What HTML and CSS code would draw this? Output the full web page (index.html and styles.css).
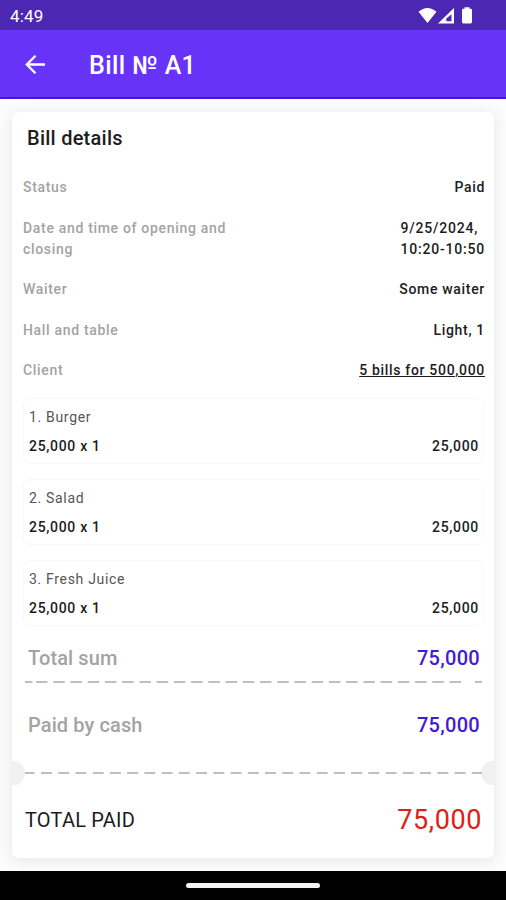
FILE: index.html
```html
<!DOCTYPE html>
<html lang="en">
<head>
<meta charset="utf-8">
<title>Bill № A1</title>
<link rel="stylesheet" href="styles.css">
</head>
<body>
<div class="screen">
  <div class="status-bar">
    <span class="clock">4:49</span>
    <svg class="status-icons" width="56" height="20" viewBox="0 0 56 20" fill="#fff">
      <path d="M0.5 5.7Q9.5-1.9 18.5 5.7L9.5 17Z"/>
      <path fill-rule="evenodd" d="M20 17.5L36 2V17.5ZM28.3 15.2H33.5V8.2L28.3 12.4Z"/>
      <path d="M46.5 1.2h5v1.6h1.2q1.3 0 1.3 1.3v12q0 1.4-1.3 1.4h-7.4q-1.3 0-1.3-1.4v-12q0-1.3 1.3-1.3h1.2z"/>
    </svg>
  </div>
  <header class="app-bar">
    <svg class="back" width="22" height="20" viewBox="0 0 22 20" fill="none" stroke="#fff" stroke-width="2.3"><path d="M20 10.5H2.5M10.5 1.7L1.8 10.5L10.5 19.3"/></svg>
    <h1 class="title">Bill № A1</h1>
  </header>
  <main class="content">
    <section class="card">
      <h2 class="card-title">Bill details</h2>
      <div class="details">
        <div class="row"><span class="label">Status</span><span class="value">Paid</span></div>
        <div class="row"><span class="label">Date and time of opening and<br>closing</span><span class="value date">9/25/2024,<br>10:20-10:50</span></div>
        <div class="row"><span class="label">Waiter</span><span class="value">Some waiter</span></div>
        <div class="row"><span class="label">Hall and table</span><span class="value">Light, 1</span></div>
        <div class="row"><span class="label">Client</span><span class="value link">5 bills for 500,000</span></div>
      </div>
      <div class="items">
        <div class="item"><div class="name">1. Burger</div><div class="price"><span>25,000 x 1</span><span>25,000</span></div></div>
        <div class="item"><div class="name">2. Salad</div><div class="price"><span>25,000 x 1</span><span>25,000</span></div></div>
        <div class="item"><div class="name">3. Fresh Juice</div><div class="price"><span>25,000 x 1</span><span>25,000</span></div></div>
      </div>
      <div class="sum"><span>Total sum</span><span class="amount">75,000</span></div>
      <svg class="dash" width="458" height="2"><path d="M0 1H7.5M11 1H437" stroke-dasharray="11.5 5.73"/><path d="M450 1H457"/></svg>
      <div class="sum cash"><span>Paid by cash</span><span class="amount">75,000</span></div>
      <div class="divider">
        <svg class="dash" width="458" height="2"><path d="M0 1H9.6M16 1H457" stroke-dasharray="11 6.23"/></svg>
      </div>
      <div class="total"><span>TOTAL PAID</span><span class="total-amount">75,000</span></div>
    </section>
  </main>
  <nav class="nav-bar"><div class="handle"></div></nav>
</div>
</body>
</html>
```

FILE: styles.css
```css
* { box-sizing: border-box; }
body { margin: 0; font-family: Roboto, sans-serif; color: #1c1c1c; background: #fff; }
.screen { width: 506px; height: 900px; display: flex; flex-direction: column; overflow: hidden; }
.status-bar { height: 30px; background: #4b27b3; color: #fff; display: flex; align-items: center; justify-content: space-between; padding: 2px 32px 0 10px; flex: none; }
.clock { font-size: 17px; line-height: 20px; letter-spacing: .2px; }
.status-icons { margin-top: -1px; }
.app-bar { height: 69px; background: #6733f8; border-bottom: 2px solid #4a13dc; display: flex; align-items: center; padding: 1px 0 0 25px; flex: none; }
.title { margin: 3px 0 0 42px; font-size: 25px; line-height: 30px; font-weight: 500; letter-spacing: .4px; color: #fff; }
.content { flex: 1; background: #fcfcfc; padding: 13px 12px 0; overflow: hidden; }
.card { height: 746px; background: #fff; border-radius: 7px; box-shadow: 0 2px 14px 2px rgba(0,0,0,.075); padding: 15px 10px 0 11px; }
.card-title { margin: 0 0 28px 4px; font-size: 20px; line-height: 22px; font-weight: 500; letter-spacing: .25px; }
.details { display: flex; flex-direction: column; gap: 19.5px; }
.row { display: flex; justify-content: space-between; font-size: 14px; line-height: 21px; font-weight: 500; letter-spacing: .68px; margin-right: -1px; }
.label { color: #a3a3a3; }
.date { text-align: left; letter-spacing: .78px; }
.link { text-decoration: underline; text-underline-offset: 1px; text-decoration-thickness: 1px; }
.items { display: flex; flex-direction: column; gap: 15.2px; margin-top: 17px; }
.item { height: 66px; border: 1px solid #f8f8f8; border-radius: 7px; padding: 8px 4px 0 5px; font-size: 14px; line-height: 20px; letter-spacing: .68px; }
.name { color: #555; }
.price { display: flex; justify-content: space-between; margin-top: 9px; font-weight: 500; }
.sum { display: flex; justify-content: space-between; margin-top: 19.4px; padding: 0 4px 0 5px; font-size: 20px; line-height: 24px; font-weight: 500; letter-spacing: .1px; color: #a3a3a3; }
.amount { color: #431bd3; letter-spacing: .3px; }
.dash { display: block; margin: 11px 0 0 2px; fill: none; stroke: #bfbfbf; stroke-width: 2; }
.cash { margin-top: 30px; }
.divider { height: 24px; display: flex; align-items: center; justify-content: space-between; margin: 24px -10px 0 -11px; background: radial-gradient(circle at 0 12px, #f1f1f1 12.5px, transparent 13px), radial-gradient(circle at 100% 12px, #f1f1f1 12.5px, transparent 13px); }
.divider .dash { margin: 0 0 0 13px; }
.total { display: flex; align-items: center; justify-content: space-between; height: 36px; margin-top: 17px; padding: 0 2px; font-size: 20px; letter-spacing: .2px; }
.total-amount { font-size: 27px; letter-spacing: .6px; color: #dc2114; }
.nav-bar { height: 29px; background: #000; display: flex; justify-content: center; flex: none; padding-top: 12px; }
.handle { width: 134px; height: 5px; border-radius: 3px; background: #f3f3f3; }
```
